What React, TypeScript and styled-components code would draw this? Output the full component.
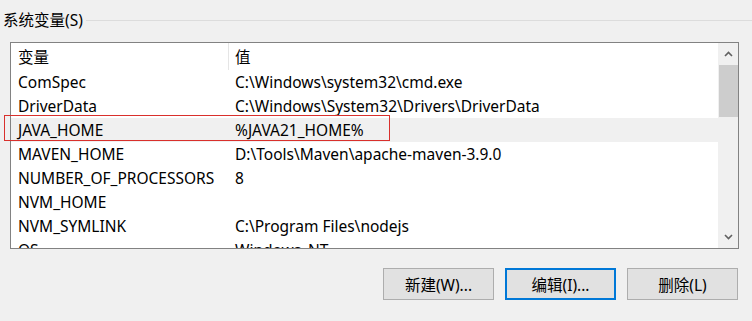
import styled, { createGlobalStyle } from "styled-components";

const GlobalStyle = createGlobalStyle`
  body {
    margin: 0;
    background: #f0f0f0;
    font-family: "Noto Sans", "Noto Sans CJK SC", sans-serif;
    color: #000;
  }
`;

const Page = styled.div`
  width: 752px;
  height: 321px;
  overflow: hidden;
  display: flex;
  flex-direction: column;
`;

const GroupHeader = styled.div`
  display: flex;
  align-items: center;
  height: 42px;
  padding-left: 3px;
  gap: 3px;
`;

const GroupTitle = styled.span`
  font-size: 15.5px;
  line-height: 20px;
  margin-top: -2px;
`;

const GroupLine = styled.div`
  flex: 1;
  height: 1px;
  background: #dcdcdc;
  margin-top: -2px;
`;

const Panel = styled.div`
  position: relative;
  margin-left: 10px;
  width: 729px;
  height: 207px;
`;

const ListBox = styled.div`
  box-sizing: border-box;
  width: 100%;
  height: 100%;
  border: 1px solid #828282;
  background: #fff;
  display: flex;
  overflow: hidden;
`;

const Rows = styled.div`
  flex: 1;
  display: flex;
  flex-direction: column;
`;

const Row = styled.div<{ selected?: boolean; header?: boolean }>`
  display: grid;
  grid-template-columns: 217px 1fr;
  height: ${(p) => (p.header ? "27px" : "24px")};
  flex-shrink: 0;
  align-items: center;
  background: ${(p) => (p.selected ? "#f0f0f0" : "#fff")};
  font-size: 15.5px;
`;

const Cell = styled.div<{ divider?: boolean }>`
  height: 100%;
  display: flex;
  align-items: center;
  white-space: nowrap;
  border-left: ${(p) => (p.divider ? "1px solid #e5e5e5" : "none")};
  padding-left: ${(p) => (p.divider ? "6px" : "7px")};
`;

const ScrollBar = styled.div`
  width: 20px;
  background: #f0f0f0;
  display: flex;
  flex-direction: column;
  align-items: center;
`;

const Arrow = styled.div`
  height: 22px;
  width: 100%;
  display: flex;
  align-items: center;
  justify-content: center;
  flex-shrink: 0;
`;

const Thumb = styled.div`
  width: 19px;
  height: 52px;
  background: #cdcdcd;
`;

const Track = styled.div`
  flex: 1;
`;

const Annotation = styled.div`
  position: absolute;
  left: -6px;
  top: 73px;
  width: 386px;
  height: 26px;
  box-sizing: border-box;
  border: 1px solid #d9302c;
  pointer-events: none;
`;

const ButtonBar = styled.div`
  display: flex;
  justify-content: flex-end;
  gap: 11px;
  padding-right: 14px;
  margin-top: 19px;
`;

const Button = styled.button<{ primary?: boolean }>`
  box-sizing: border-box;
  width: 111px;
  height: 32px;
  background: #e1e1e1;
  border: ${(p) => (p.primary ? "2px solid #0078d7" : "1px solid #adadad")};
  font-family: "Noto Sans", "Noto Sans CJK SC", sans-serif;
  font-size: 15.5px;
  color: #000;
  padding: 0;
`;

const Chevron = ({ up }: { up?: boolean }) => (
  <svg width="9" height="6" viewBox="0 0 9 6">
    <path
      d={up ? "M1 5 L4.5 1.5 L8 5" : "M1 1 L4.5 4.5 L8 1"}
      fill="none"
      stroke="#606060"
      strokeWidth="1.6"
    />
  </svg>
);

const vars = [
  ["ComSpec", "C:\\Windows\\system32\\cmd.exe"],
  ["DriverData", "C:\\Windows\\System32\\Drivers\\DriverData"],
  ["JAVA_HOME", "%JAVA21_HOME%"],
  ["MAVEN_HOME", "D:\\Tools\\Maven\\apache-maven-3.9.0"],
  ["NUMBER_OF_PROCESSORS", "8"],
  ["NVM_HOME", ""],
  ["NVM_SYMLINK", "C:\\Program Files\\nodejs"],
  ["OS", "Windows_NT"],
];

const App = () => {
  return (
    <Page>
      <GlobalStyle />
      <GroupHeader>
        <GroupTitle>系统变量(S)</GroupTitle>
        <GroupLine />
      </GroupHeader>
      <Panel>
        <ListBox>
          <Rows>
            <Row header>
              <Cell>变量</Cell>
              <Cell divider>值</Cell>
            </Row>
            {vars.map(([name, value]) => (
              <Row key={name} selected={name === "JAVA_HOME"}>
                <Cell>{name}</Cell>
                <Cell>{value}</Cell>
              </Row>
            ))}
          </Rows>
          <ScrollBar>
            <Arrow>
              <Chevron up />
            </Arrow>
            <Thumb />
            <Track />
            <Arrow>
              <Chevron />
            </Arrow>
          </ScrollBar>
        </ListBox>
        <Annotation />
      </Panel>
      <ButtonBar>
        <Button>新建(W)...</Button>
        <Button primary>编辑(I)...</Button>
        <Button>删除(L)</Button>
      </ButtonBar>
    </Page>
  );
};

export default App;
